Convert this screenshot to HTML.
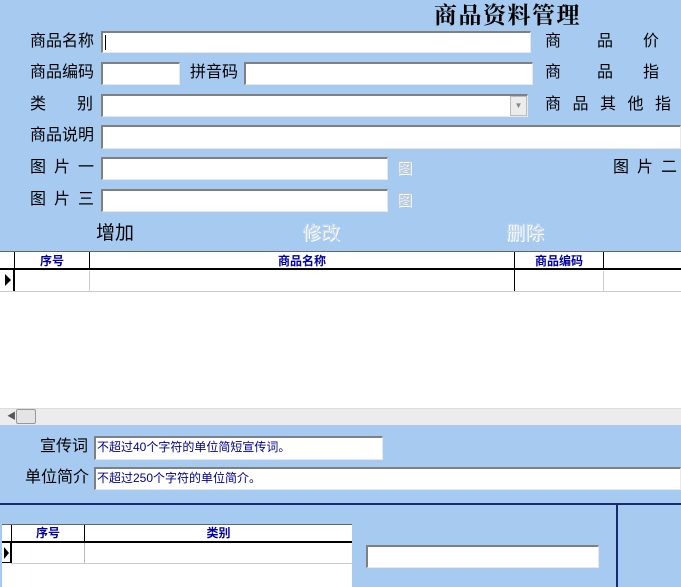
<!DOCTYPE html>
<html><head><meta charset="utf-8"><style>
body{margin:0;width:681px;height:587px;overflow:hidden;background:#A6CAF0;position:relative;font-family:"Liberation Sans","Noto Sans CJK SC","WenQuanYi Zen Hei",sans-serif;font-size:16px;color:#000}
div{position:absolute;box-sizing:border-box}
.l{white-space:nowrap;line-height:20px}
.in{background:#fff;border-top:2px solid #808080;border-left:2px solid #808080;border-bottom:1px solid #e8e8e8;border-right:1px solid #e8e8e8}
.g{color:#c8d8ec;font-size:19px;text-shadow:1px 1px 0 #fff}
.hd{font-size:12px;font-weight:bold;color:#0000a0;text-align:center;line-height:17px}
.ic{color:#c0c8d0;font-size:15px;text-shadow:1px 1px 0 #fff}
</style></head><body>
<div class="l" style="left:434px;top:2px;font-family:'Liberation Serif','Noto Serif CJK SC',serif;font-size:23px;font-weight:bold;line-height:27px;letter-spacing:1.5px">商品资料管理</div>

<div class="l" style="left:30px;top:32px">商品名称</div>
<div class="in" style="left:101px;top:31px;width:430px;height:22px"><div style="left:2px;top:2px;width:1px;height:15px;background:#000"></div></div>
<div class="l" style="left:545px;top:32px">商</div><div class="l" style="left:597px;top:32px">品</div><div class="l" style="left:643px;top:32px">价</div>

<div class="l" style="left:30px;top:63px">商品编码</div>
<div class="in" style="left:101px;top:62px;width:79px;height:23px"></div>
<div class="l" style="left:190px;top:63px">拼音码</div>
<div class="in" style="left:244px;top:62px;width:289px;height:23px"></div>
<div class="l" style="left:545px;top:63px">商</div><div class="l" style="left:597px;top:63px">品</div><div class="l" style="left:643px;top:63px">指</div>

<div class="l" style="left:30px;top:95px">类</div><div class="l" style="left:77px;top:95px">别</div>
<div class="in" style="left:101px;top:94px;width:427px;height:23px"><div style="right:0;top:0;width:17px;height:20px;background:#ececec;border:1px solid #bbb;font-size:8px;color:#888;text-align:center;line-height:18px">▼</div></div>
<div class="l" style="left:545px;top:95px;letter-spacing:11.5px">商品其他指</div>

<div class="l" style="left:30px;top:126px">商品说明</div>
<div class="in" style="left:101px;top:125px;width:580px;height:24px"></div>

<div class="l" style="left:30px;top:158px;letter-spacing:8px">图片一</div>
<div class="in" style="left:101px;top:157px;width:287px;height:23px"></div>
<div class="l ic" style="left:397px;top:159px">图</div>
<div class="l" style="left:613px;top:158px;letter-spacing:8px">图片二</div>

<div class="l" style="left:30px;top:190px;letter-spacing:8px">图片三</div>
<div class="in" style="left:101px;top:189px;width:287px;height:23px"></div>
<div class="l ic" style="left:397px;top:191px">图</div>

<div class="l" style="left:96px;top:224px;font-size:19px">增加</div>
<div class="l g" style="left:302px;top:224px">修改</div>
<div class="l g" style="left:506px;top:224px">删除</div>

<div style="left:0;top:251px;width:681px;height:157px;background:#fff;border-top:1px solid #666"></div>
<div style="left:0;top:252px;width:681px;height:18px;border-bottom:2px solid #000"></div>
<div style="left:14px;top:252px;width:1px;height:39px;background:#000"></div>
<div style="left:0;top:270px;width:14px;height:21px;border-right:1px solid #000"><div style="left:5px;top:4px;width:0;height:0;border-left:6px solid #000;border-top:6px solid transparent;border-bottom:6px solid transparent"></div></div>
<div style="left:89px;top:252px;width:1px;height:18px;background:#000"></div>
<div style="left:89px;top:271px;width:1px;height:20px;background:#ccc"></div>
<div style="left:514px;top:252px;width:1px;height:39px;background:#000"></div>
<div style="left:603px;top:252px;width:1px;height:18px;background:#000"></div>
<div style="left:603px;top:271px;width:1px;height:20px;background:#ccc"></div>
<div style="left:0;top:291px;width:681px;height:1px;background:#ccc"></div>
<div class="hd" style="left:15px;top:253px;width:74px">序号</div>
<div class="hd" style="left:90px;top:253px;width:424px">商品名称</div>
<div class="hd" style="left:515px;top:253px;width:88px">商品编码</div>

<div style="left:0;top:408px;width:681px;height:17px;background:#ececec;border-top:1px solid #ddd"></div>
<div class="l" style="left:7px;top:408px;font-size:9px;line-height:16px;color:#555">◀</div>
<div style="left:16px;top:409px;width:20px;height:15px;background:#e4e4e4;border:1px solid #999;border-radius:2px"></div>

<div class="l" style="left:40px;top:437px">宣传词</div>
<div class="in" style="left:94px;top:436px;width:289px;height:24px;font-size:12px;color:#00008b;line-height:18px;padding-left:1px">不超过40个字符的单位简短宣传词。</div>
<div class="l" style="left:25px;top:468px">单位简介</div>
<div class="in" style="left:94px;top:467px;width:587px;height:23px;font-size:12px;color:#00008b;line-height:18px;padding-left:1px">不超过250个字符的单位简介。</div>

<div style="left:0;top:503px;width:681px;height:2px;background:#1a2a70"></div>
<div style="left:616px;top:505px;width:2px;height:82px;background:#1a2a70"></div>

<div style="left:2px;top:524px;width:350px;height:63px;background:#fff;border-top:1px solid #666"></div>
<div style="left:2px;top:525px;width:350px;height:18px;border-bottom:2px solid #000"></div>
<div style="left:11px;top:525px;width:1px;height:38px;background:#000"></div>
<div style="left:2px;top:543px;width:9px;height:20px;border-right:1px solid #000;border-bottom:1px solid #000"><div style="left:2px;top:4px;width:0;height:0;border-left:5px solid #000;border-top:6px solid transparent;border-bottom:6px solid transparent"></div></div>
<div style="left:84px;top:525px;width:1px;height:38px;background:#bbb"></div>
<div style="left:84px;top:525px;width:1px;height:18px;background:#000"></div>
<div style="left:11px;top:563px;width:341px;height:1px;background:#ccc"></div>
<div class="hd" style="left:12px;top:525px;width:72px">序号</div>
<div class="hd" style="left:85px;top:525px;width:267px">类别</div>

<div class="in" style="left:366px;top:545px;width:233px;height:23px"></div>
</body></html>
